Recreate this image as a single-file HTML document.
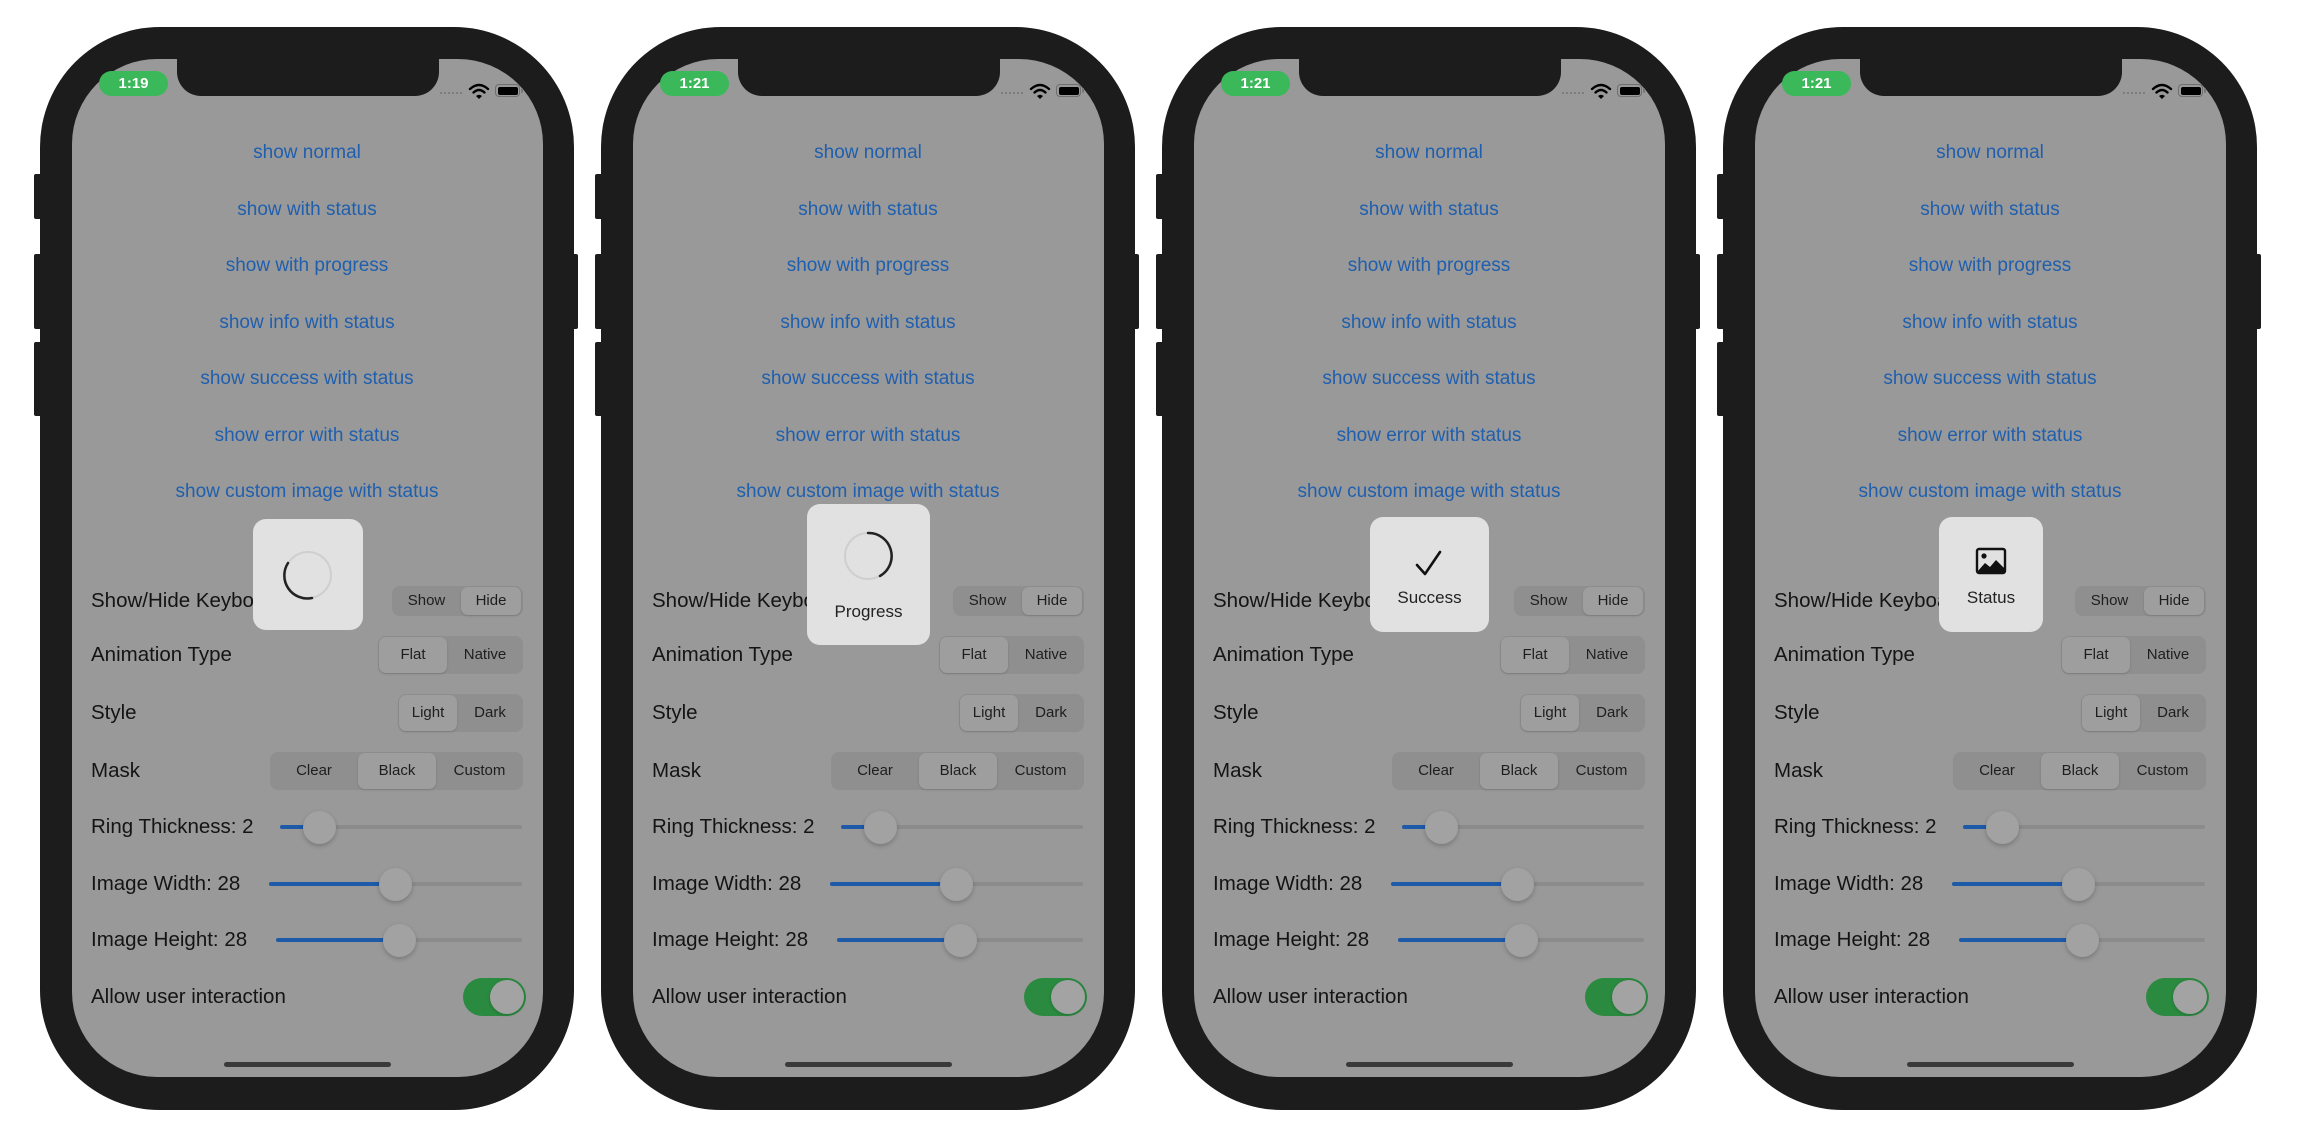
<!DOCTYPE html>
<html><head><meta charset="utf-8"><style>
*{margin:0;padding:0;box-sizing:border-box}
body{width:2300px;height:1140px;background:#fff;position:relative;overflow:hidden;font-family:"Liberation Sans",sans-serif}
.ph{position:absolute;top:27px;width:534px;height:1083px;background:#1c1c1c;border-radius:120px}
.sb{position:absolute;background:#1c1c1c;border-radius:2px}
.scr{position:absolute;left:32px;top:32px;width:471px;height:1018px;background:#999;border-radius:85px;overflow:hidden}
.a{position:absolute}
.notch{position:absolute;left:137px;top:28px;width:262px;height:41px;background:#1c1c1c;border-radius:0 0 24px 24px}
.pill{left:59px;top:44px;width:69px;height:25px;border-radius:13px;background:#3bb85a;color:#fff;font-size:15px;font-weight:bold;text-align:center;line-height:25px}
.btn{left:0;width:534px;text-align:center;color:#1f5fae;font-size:19px;line-height:24px}
.lbl{left:51px;color:#141414;font-size:20.5px;line-height:24px;white-space:nowrap}
.seg{background:#8f8f8f;border-radius:8px;height:31px;font-size:15px;color:#1e1e1e}
.seg span{position:absolute;top:0;height:100%;text-align:center}
.sel{background:#9e9e9e;border-radius:7px;box-shadow:0 1px 2px rgba(0,0,0,.15);top:1px!important;height:calc(100% - 2px)!important}
.tr{height:4px;background:#8b8b8b;border-radius:2px}
.bl{height:4px;background:#1d5aa8;border-radius:2px}
.th{width:33px;height:33px;border-radius:50%;background:#a2a2a2;box-shadow:0 2px 5px rgba(0,0,0,.22)}
.hud{background:#e1e1e1;border-radius:13px}
.ht{width:100%;text-align:center;color:#222;font-size:17px;line-height:20px}
</style></head><body>
<div id="root"></div>
<script>
var huds=[
 {x:213,y:492,w:110,h:111,inner:'<svg class="a" style="left:0;top:0" width="110" height="111"><circle cx="55" cy="56" r="23" fill="none" stroke="#cfcfcf" stroke-width="2"/><path d="M35 44 A23 23 0 0 0 59 79" fill="none" stroke="#222" stroke-width="2.5" stroke-linecap="round"/></svg>',time:'1:19'},
 {x:206,y:477,w:123,h:141,inner:'<svg class="a" style="left:0;top:0" width="123" height="141"><circle cx="61" cy="52" r="23" fill="none" stroke="#cfcfcf" stroke-width="2"/><path d="M61 29 A23 23 0 0 1 73 72" fill="none" stroke="#222" stroke-width="2.5" stroke-linecap="round"/></svg><div class="a ht" style="top:98px">Progress</div>',time:'1:21'},
 {x:208,y:490,w:119,h:115,inner:'<svg class="a" style="left:0;top:0" width="119" height="115"><path d="M47 48 L55 57 L70 35" fill="none" stroke="#111" stroke-width="2.6" stroke-linecap="round" stroke-linejoin="round"/></svg><div class="a ht" style="top:71px">Success</div>',time:'1:21'},
 {x:216,y:490,w:104,h:115,inner:'<svg class="a" style="left:0;top:0" width="104" height="115"><rect x="38" y="32" width="28" height="24" rx="2" fill="none" stroke="#111" stroke-width="2.4"/><circle cx="45" cy="39" r="2.6" fill="#111"/><path d="M38 55 L46 46 L51 50 L57 43 L66 52 L66 56 L38 56Z" fill="#111"/></svg><div class="a ht" style="top:71px">Status</div>',time:'1:21'}
];
var btns=['show normal','show with status','show with progress','show info with status','show success with status','show error with status','show custom image with status'];
var by=[126,183,239,296,352,409,465];
var h='';
for(var i=0;i<4;i++){
 var L=40+i*561, d=huds[i];
 h+='<div class="sb" style="left:'+(L-6)+'px;top:174px;width:8px;height:45px"></div>';
 h+='<div class="sb" style="left:'+(L-6)+'px;top:254px;width:8px;height:75px"></div>';
 h+='<div class="sb" style="left:'+(L-6)+'px;top:342px;width:8px;height:74px"></div>';
 h+='<div class="sb" style="left:'+(L+530)+'px;top:254px;width:8px;height:75px"></div>';
 h+='<div class="ph" style="left:'+L+'px"><div class="scr"></div><div class="notch"></div>';
 h+='<div class="a pill">'+d.time+'</div>';
 h+='<div class="a" style="left:400px;top:65px;width:22px;border-top:2px dotted #7d7d7d"></div>';
 h+='<svg class="a" style="left:428px;top:55px" width="22" height="18"><path d="M2 7 Q11 -1 20 7" fill="none" stroke="#000" stroke-width="2.4" stroke-linecap="round"/><path d="M5.5 10.5 Q11 5.5 16.5 10.5" fill="none" stroke="#000" stroke-width="2.4" stroke-linecap="round"/><path d="M8 14 L11 17 L14 14 Q11 11.5 8 14Z" fill="#000"/></svg>';
 h+='<div class="a" style="left:455px;top:57px;width:25px;height:13px;border:1.5px solid #6f6f6f;border-radius:4px;padding:1.5px"><div style="width:100%;height:100%;background:#000;border-radius:2px"></div></div><div class="a" style="left:481px;top:61px;width:2px;height:5px;background:#777;border-radius:1px"></div>';
 for(var j=0;j<7;j++) h+='<div class="a btn" style="top:'+(by[j]-12)+'px">'+btns[j]+'</div>';
 var labs=['Show/Hide Keyboard','Animation Type','Style','Mask','Ring Thickness: 2','Image Width: 28','Image Height: 28','Allow user interaction'];
 var ly=[574,628,686,744,800,857,913,970];
 for(var j=0;j<8;j++) h+='<div class="a lbl" style="top:'+(ly[j]-12)+'px">'+labs[j]+'</div>';
 h+='<div class="a seg" style="left:352px;top:559px;width:131px;height:30px"><span style="left:0;width:69px;line-height:30px">Show</span><span class="sel" style="left:69px;width:60px;line-height:28px">Hide</span></div>';
 h+='<div class="a seg" style="left:338px;top:609px;width:145px;height:38px"><span class="sel" style="left:1px;width:68px;line-height:36px">Flat</span><span style="left:69px;width:76px;line-height:38px">Native</span></div>';
 h+='<div class="a seg" style="left:358px;top:667px;width:125px;height:38px"><span class="sel" style="left:1px;width:58px;line-height:36px">Light</span><span style="left:59px;width:66px;line-height:38px">Dark</span></div>';
 h+='<div class="a seg" style="left:230px;top:725px;width:253px;height:38px"><span style="left:0;width:88px;line-height:38px">Clear</span><span class="sel" style="left:88px;width:78px;line-height:36px">Black</span><span style="left:166px;width:87px;line-height:38px">Custom</span></div>';
 var sl=[[240,800,279],[229,857,355],[236,913,359]];
 for(var j=0;j<3;j++){var s=sl[j];
  h+='<div class="a tr" style="left:'+s[0]+'px;top:'+(s[1]-2)+'px;width:'+(482-s[0])+'px"></div>';
  h+='<div class="a bl" style="left:'+s[0]+'px;top:'+(s[1]-2)+'px;width:'+(s[2]-s[0])+'px"></div>';
  h+='<div class="a th" style="left:'+(s[2]-16)+'px;top:'+(s[1]-16)+'px"></div>';}
 h+='<div class="a" style="left:423px;top:951px;width:63px;height:38px;border-radius:19px;background:#2a8a3f"></div><div class="a" style="left:450px;top:953px;width:34px;height:34px;border-radius:50%;background:#a3a3a3;box-shadow:0 1px 3px rgba(0,0,0,.2)"></div>';
 h+='<div class="a" style="left:184px;top:1035px;width:167px;height:5px;border-radius:3px;background:#3a3a3a"></div>';
 h+='<div class="a hud" style="left:'+d.x+'px;top:'+d.y+'px;width:'+d.w+'px;height:'+d.h+'px">'+d.inner+'</div>';
 h+='</div>';
}
document.getElementById('root').innerHTML=h;
</script>
</body></html>
